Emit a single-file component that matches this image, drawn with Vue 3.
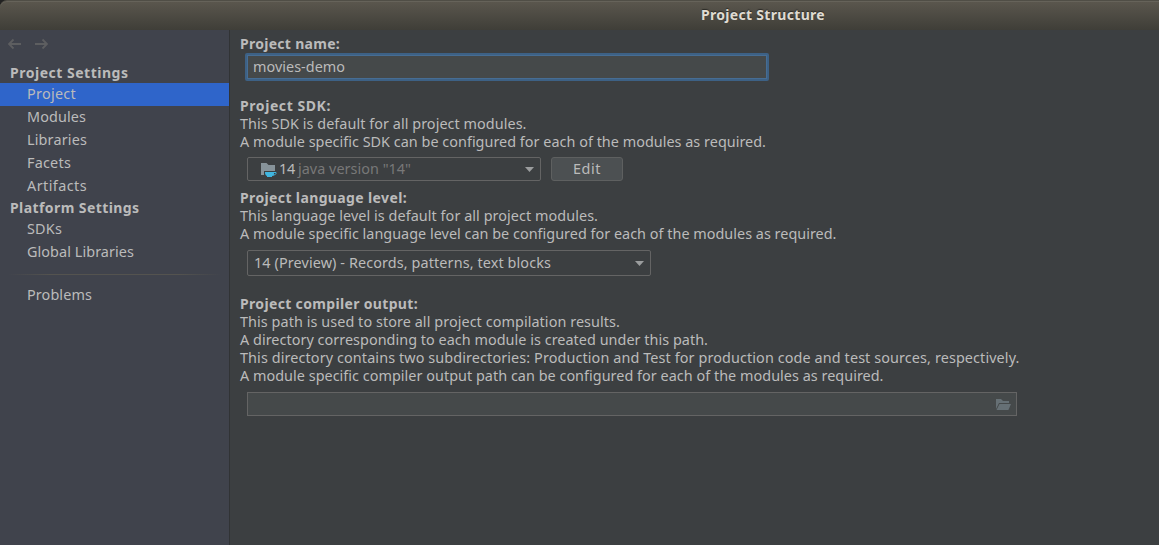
<script setup>
const groups = [
  {
    title: 'Project Settings', width: 118.5,
    items: [
      { label: 'Project', width: 49, active: true },
      { label: 'Modules', width: 59 },
      { label: 'Libraries', width: 60 },
      { label: 'Facets', width: 44 },
      { label: 'Artifacts', width: 60 },
    ],
  },
  {
    title: 'Platform Settings', width: 129.5,
    items: [
      { label: 'SDKs', width: 35 },
      { label: 'Global Libraries', width: 107 },
    ],
  },
]
const sdkLines = [
  { text: 'This SDK is default for all project modules.', width: 286.5 },
  { text: 'A module specific SDK can be configured for each of the modules as required.', width: 526 },
]
const levelLines = [
  { text: 'This language level is default for all project modules.', width: 358 },
  { text: 'A module specific language level can be configured for each of the modules as required.', width: 596.5 },
]
const outputLines = [
  { text: 'This path is used to store all project compilation results.', width: 380 },
  { text: 'A directory corresponding to each module is created under this path.', width: 468 },
  { text: 'This directory contains two subdirectories: Production and Test for production code and test sources, respectively.', width: 779.5 },
  { text: 'A module specific compiler output path can be configured for each of the modules as required.', width: 643.5 },
]

// Tracks a label so that it fills the given width in pixels.
const vFit = {
  mounted(el, { value }) {
    const natural = el.getBoundingClientRect().width
    el.style.letterSpacing = `${(value - natural) / el.textContent.length}px`
  },
}
</script>

<template>
  <div class="window">
    <header class="titlebar"><span v-fit="124" class="title">Project Structure</span></header>
    <div class="body">
      <aside class="sidebar">
        <div class="nav">
          <svg width="14" height="12" viewBox="0 0 14 12"><path d="M13 6H1.2M5.500 1.5L1 6L5.500 10.5" /></svg>
          <svg width="14" height="12" viewBox="0 0 14 12"><path d="M1 6h11.8M8.500 1.5L13 6L8.500 10.5" /></svg>
        </div>
        <section v-for="g in groups" :key="g.title">
          <div class="group"><span v-fit="g.width">{{ g.title }}</span></div>
          <div v-for="i in g.items" :key="i.label" class="item" :class="{ active: i.active }">
            <span v-fit="i.width">{{ i.label }}</span>
          </div>
        </section>
        <div class="divider"></div>
        <div class="item"><span v-fit="65">Problems</span></div>
      </aside>

      <main class="content">
        <div class="heading"><span v-fit="100">Project name:</span></div>
        <div class="name-field"><span v-fit="92">movies-demo</span></div>

        <div class="heading sdk-heading"><span v-fit="91">Project SDK:</span></div>
        <div v-for="l in sdkLines" :key="l.text" class="line"><span v-fit="l.width">{{ l.text }}</span></div>
        <div class="sdk-row">
          <div class="combo sdk-combo">
            <svg class="sdk-icon" width="16" height="15" viewBox="0 0 16 15">
              <path d="M0 0h5.500l2 2H14v6H3v4H0z" fill="#87939a" />
              <path d="M4 9h9v1.500C13 13 11.500 13 11 13v1H6v-1C4.500 12.500 4 11 4 9z" fill="#40b6e0" />
              <path d="M12.500 9.500h2.500v1L13.500 12h-1.500" fill="none" stroke="#40b6e0" />
            </svg>
            <span v-fit="16" class="version">14</span>
            <span v-fit="113" class="muted">java version "14"</span>
            <svg class="arrow" width="9" height="5" viewBox="0 0 9 5"><path d="M0 0h9L4.500 5z" /></svg>
          </div>
          <div class="button"><span v-fit="28">Edit</span></div>
        </div>

        <div class="heading level-heading"><span v-fit="167">Project language level:</span></div>
        <div v-for="l in levelLines" :key="l.text" class="line"><span v-fit="l.width">{{ l.text }}</span></div>
        <div class="combo level-combo">
          <span v-fit="297">14 (Preview) - Records, patterns, text blocks</span>
          <svg class="arrow" width="9" height="5" viewBox="0 0 9 5"><path d="M0 0h9L4.500 5z" /></svg>
        </div>

        <div class="heading output-heading"><span v-fit="178">Project compiler output:</span></div>
        <div v-for="l in outputLines" :key="l.text" class="line"><span v-fit="l.width">{{ l.text }}</span></div>
        <div class="path-field">
          <svg width="15" height="12" viewBox="0 0 15 12">
            <path d="M0 0h5l2 2h6v2H3L0 10z" />
            <path d="M3.500 5H15l-2.600 6H.5z" />
          </svg>
        </div>
      </main>
    </div>
  </div>
</template>

<style>
body { background: #222; }
</style>

<style scoped>
.window {
  width: 1159px;
  height: 545px;
  display: flex;
  flex-direction: column;
  overflow: hidden;
  font: 14.4px/18px "Noto Sans", sans-serif;
  color: #bbb;
  white-space: nowrap;
}
.window *, .window { box-sizing: border-box; }
span { flex: none; }
svg { display: block; flex: none; }
.titlebar {
  height: 30px;
  padding: 5px 0 0 701px;
  border-radius: 7px 0 0 0;
  border-top: 1px solid #504e46;
  box-shadow: inset 0 1px #66635a;
  background: linear-gradient(#5b574e, #3f3e38);
  font-weight: 700;
  font-size: 14px;
  line-height: 17px;
  color: #dfdbd2;
  text-shadow: 0 -1px 1px #2b2a26;
}
.title { display: inline-block; }
.body { flex: 1; display: flex; min-height: 0; }
.sidebar {
  width: 230px;
  background: #40434c;
  border-right: 1px solid #313335;
}
.nav { display: flex; gap: 12px; height: 33px; padding: 8px 0 0 8px; }
.nav path { fill: none; stroke: #5d5e60; stroke-width: 1.8; }
.group {
  display: flex;
  height: 20px;
  padding-left: 10px;
  line-height: 19px;
  font-weight: 700;
  font-size: 14px;
}
.item { display: flex; height: 23px; padding-left: 27px; line-height: 22px; }
.active { background: #2f65ca; }
.divider {
  height: 1px;
  margin: 10px 8px 9px;
  background: linear-gradient(90deg, transparent, #54534f 20%, #54534f 80%, transparent);
}
.content { flex: 1; padding: 5px 0 0 10px; background: #3c3f41; }
.heading { display: flex; height: 18px; font-weight: 700; font-size: 14px; }
.line { display: flex; height: 18px; }
.name-field {
  display: flex;
  width: 524px;
  height: 28px;
  margin-left: 5px;
  padding-left: 6px;
  border: 2px solid #3d6185;
  border-radius: 2px;
  box-shadow: inset 0 0 0 1px #466d94;
  background: #45494a;
  line-height: 23px;
}
.sdk-heading { margin-top: 16px; }
.sdk-row { display: flex; gap: 10px; margin: 6px 0 8px 7px; }
.combo {
  display: flex;
  align-items: center;
  border: 1px solid #646464;
  border-radius: 2px;
}
.sdk-combo { width: 294px; height: 24px; padding: 0 6px 0 13px; }
.sdk-icon { margin-right: 2px; margin-top: 3px; }
.version { margin-right: 3px; }
.muted { color: #787878; }
.arrow { margin-left: auto; fill: #9b9d9e; }
.button {
  display: flex;
  justify-content: center;
  width: 72px;
  height: 24px;
  border: 1px solid #5e6060;
  border-radius: 3px;
  background: #4c5052;
  line-height: 22px;
}
.level-combo { width: 404px; height: 26px; margin: 7px 0 0 7px; padding: 0 6px; }
.output-heading { margin-top: 19px; }
.path-field {
  display: flex;
  align-items: center;
  justify-content: flex-end;
  width: 770px;
  height: 24px;
  margin: 7px 0 0 7px;
  padding: 2px 5px 0 0;
  border: 1px solid #646464;
  background: #45494a;
}
.path-field path { fill: #667075; }
</style>
